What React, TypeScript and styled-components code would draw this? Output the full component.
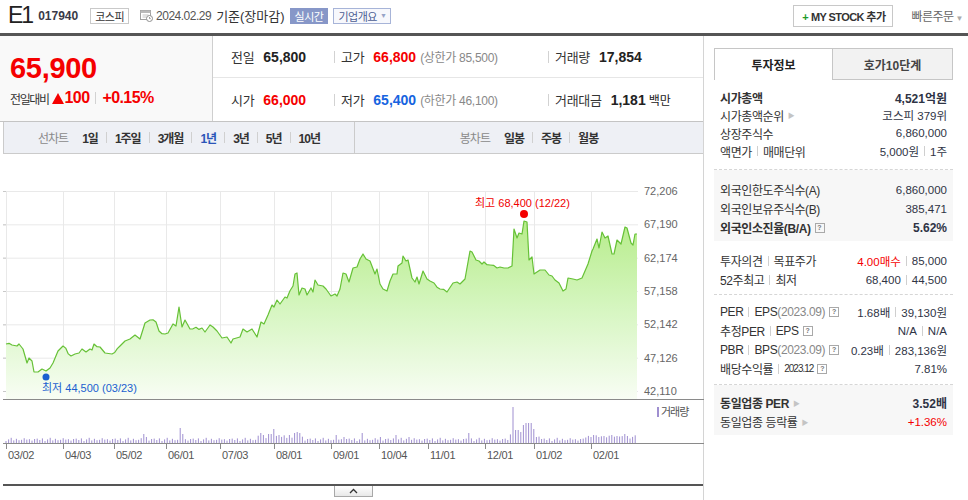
import React from "react";
import styled, { createGlobalStyle } from "styled-components";

const SANS = `"Liberation Sans", "Noto Sans CJK KR", sans-serif`;

const red = "#f50000";
const blue = "#1764e0";

const GlobalStyle = createGlobalStyle`
  * { box-sizing: border-box; }
  body {
    margin: 0;
    background: #fff;
    color: #333;
    font-family: ${SANS};
  }
`;

const Page = styled.div`
  width: 968px;
  height: 500px;
  overflow: hidden;
`;

/* ---------- header ---------- */

const Header = styled.header`
  display: flex;
  align-items: center;
  height: 36px;
  padding: 0 5px 2px 8px;
  border-bottom: 3px solid #555;
`;

const Name = styled.h1`
  margin: 0;
  font-size: 23px;
  font-weight: normal;
  letter-spacing: -2px;
  color: #222;
`;

const Code = styled.span`
  margin-left: 6px;
  font-size: 12px;
  font-weight: bold;
  color: #3a3a48;
`;

const Badge = styled.span<{ $tone?: "plain" | "solid" | "link" }>`
  display: inline-flex;
  align-items: center;
  height: 16px;
  padding: 0 4px;
  font-size: 11px;
  letter-spacing: -0.5px;
  border: 1px solid
    ${(p) => (p.$tone === "solid" ? "#8797c8" : p.$tone === "link" ? "#a7b4d8" : "#c9c9c9")};
  background: ${(p) => (p.$tone === "solid" ? "#8797c8" : p.$tone === "link" ? "#f7f8fc" : "#fff")};
  color: ${(p) => (p.$tone === "solid" ? "#fff" : p.$tone === "link" ? "#4d5e93" : "#333")};
  margin-left: ${(p) => (p.$tone === "plain" ? 12 : 5)}px;
`;

const DateText = styled.span`
  margin-left: 3px;
  font-size: 12px;
  letter-spacing: -0.5px;
  color: #555;
`;

const Basis = styled.span`
  margin-left: 5px;
  font-size: 13px;
  color: #333;
`;

const Spacer = styled.div`
  flex: 1;
`;

const MyStock = styled.button`
  height: 22px;
  padding: 0 7px 0 8px;
  border: 1px solid #c8c8c8;
  background: #fff;
  font-family: ${SANS};
  font-size: 11px;
  font-weight: bold;
  letter-spacing: -0.6px;
  color: #333;
  b {
    color: #1e9a2a;
    margin-right: 3px;
  }
`;

const QuickOrder = styled.span`
  margin-left: 18px;
  font-size: 12px;
  color: #666;
  letter-spacing: -0.5px;
  i {
    font-style: normal;
    font-size: 8px;
    color: #aaa;
    margin-left: 2px;
  }
`;

/* ---------- layout ---------- */

const Body = styled.div`
  display: flex;
  height: 464px;
`;

const Main = styled.section`
  width: 704px;
  border-right: 1px solid #d4d4d4;
`;

/* ---------- price block ---------- */

const PriceBlock = styled.div`
  display: flex;
  height: 86px;
  border-bottom: 1px solid #c4c4c4;
`;

const NowBox = styled.div`
  width: 213px;
  padding: 15px 0 0 10px;
  background: #f9f9f9;
  border-right: 1px solid #cfcfcf;
`;

const NowPrice = styled.div`
  font-size: 29px;
  line-height: 34px;
  font-weight: bold;
  color: ${red};
  letter-spacing: -0.3px;
`;

const Change = styled.div`
  display: flex;
  align-items: center;
  margin-top: 4px;
  color: ${red};
  font-weight: bold;
  font-size: 16px;
  letter-spacing: -0.6px;
  small {
    font-size: 12px;
    font-weight: normal;
    color: #333;
    letter-spacing: -1.4px;
    margin-right: 3px;
  }
`;

const Up = styled.span`
  width: 0;
  height: 0;
  margin-right: 1px;
  border-left: 6px solid transparent;
  border-right: 6px solid transparent;
  border-bottom: 11px solid ${red};
`;

const Sep = styled.span<{ $h?: number }>`
  display: inline-block;
  width: 1px;
  height: ${(p) => p.$h ?? 12}px;
  background: #d2d2d2;
  margin: 0 6px;
`;

const Stats = styled.div`
  flex: 1;
  display: grid;
  grid-template-columns: 121px 214px 1fr;
  grid-template-rows: 42px 43px;
`;

const Cell = styled.div<{ $first?: boolean; $top?: boolean }>`
  display: flex;
  align-items: center;
  padding-left: ${(p) => (p.$first ? 18 : 0)}px;
  border-bottom: ${(p) => (p.$top ? "1px solid #e6e6e6" : "none")};
`;

const Label = styled.span`
  font-size: 13px;
  color: #333;
  margin-right: 9px;
  letter-spacing: -0.3px;
`;

const Value = styled.span<{ $color?: string }>`
  font-size: 14px;
  font-weight: bold;
  color: ${(p) => p.$color ?? "#222"};
  small {
    font-size: 12px;
    font-weight: normal;
    margin-left: 3px;
  }
`;

const Limit = styled.span`
  margin-left: 4px;
  font-size: 12px;
  color: #888;
  letter-spacing: -0.3px;
`;

/* ---------- chart tabs ---------- */

const ChartTabs = styled.div`
  display: grid;
  grid-template-columns: 351px 1fr;
  height: 32px;
  margin-left: 3px;
  border-left: 1px solid #cbcbcb;
  border-bottom: 1px solid #cbcbcb;
  background: #eef0f5;
`;

const TabGroup = styled.div<{ $divider?: boolean }>`
  display: flex;
  align-items: center;
  justify-content: center;
  border-right: ${(p) => (p.$divider ? "1px solid #cbcbcb" : "none")};
`;

const TabTitle = styled.span`
  font-size: 12px;
  color: #8a8a8a;
  letter-spacing: -1px;
  margin-right: 14px;
`;

const TabItem = styled.span<{ $on?: boolean }>`
  font-size: 12px;
  font-weight: bold;
  letter-spacing: -1px;
  color: ${(p) => (p.$on ? "#2b55b8" : "#333")};
`;

const TabSep = styled.span`
  display: inline-block;
  width: 1px;
  height: 11px;
  margin: 0 8px;
  background: #d0d0d0;
`;

/* ---------- chart ---------- */

const ChartSvg = styled.svg`
  display: block;
  margin-left: 3px;
  text {
    font-family: ${SANS};
    font-size: 11px;
  }
`;

const Fold = styled.div`
  display: flex;
  justify-content: center;
  margin-left: 3px;
  border-top: 2px solid #555;
`;

const FoldButton = styled.button`
  display: flex;
  align-items: center;
  justify-content: center;
  width: 39px;
  height: 11px;
  padding: 0;
  border: 1px solid #a8a8a8;
  border-top: none;
  background: linear-gradient(#fff, #e8e8e8);
`;

/* ---------- side panel ---------- */

const Side = styled.aside`
  flex: 1;
  padding: 12px 15px 0 10px;
`;

const SideTabs = styled.div`
  display: grid;
  grid-template-columns: 119px 120px;
  height: 32px;
`;

const SideTab = styled.div<{ $on?: boolean }>`
  display: flex;
  align-items: center;
  justify-content: center;
  font-size: 12px;
  font-weight: bold;
  color: ${(p) => (p.$on ? "#222" : "#444")};
  background: ${(p) => (p.$on ? "#fff" : "#f2f2f2")};
  border: 1px solid #c6c6c6;
  border-bottom: ${(p) => (p.$on ? "none" : "1px solid #c6c6c6")};
  border-left: ${(p) => (p.$on ? "1px solid #c6c6c6" : "none")};
`;

const Group = styled.div<{ $grey?: boolean; $pt: number; $pb: number; $dash?: boolean }>`
  padding: ${(p) => p.$pt}px 0 ${(p) => p.$pb}px;
  background: ${(p) => (p.$grey ? "#f7f7f7" : "transparent")};
  border-bottom: ${(p) => (p.$dash ? "1px dashed #d6d6d6" : "none")};
`;

const Row = styled.div<{ $h?: number; $strong?: boolean }>`
  display: flex;
  align-items: center;
  justify-content: space-between;
  height: ${(p) => p.$h ?? 19}px;
  padding: 0 6px;
  font-size: 12px;
  letter-spacing: -0.4px;
  color: #333;
  font-weight: ${(p) => (p.$strong ? "bold" : "normal")};
`;

const Key = styled.span`
  display: flex;
  align-items: center;
  em {
    font-style: normal;
    color: #888;
  }
  small {
    font-size: 10px;
    letter-spacing: -1px;
  }
`;

const Num = styled.span<{ $color?: string }>`
  display: flex;
  align-items: center;
  font-size: 11.5px;
  letter-spacing: 0;
  color: ${(p) => p.$color ?? "#2f3445"};
`;

const Pipe = styled.span`
  display: inline-block;
  width: 1px;
  height: 10px;
  margin: 0 5px;
  background: #cfcfcf;
`;

const Help = styled.span`
  display: inline-flex;
  align-items: center;
  justify-content: center;
  width: 10px;
  height: 10px;
  margin-left: 4px;
  border: 1px solid #a9a9a9;
  font-size: 7px;
  font-weight: bold;
  color: #777;
  line-height: 1;
  letter-spacing: 0;
`;

const Arrow = styled.span`
  margin-left: 4px;
  font-size: 7px;
  color: #c4c4c4;
`;

/* ---------- data ---------- */

const PRICE: [number, number][] = [
  [6,343],[12,344],[17,345],[19,343],[23,348],[27,362],[29,357],[32,360],[34,371],[38,371],[42,368],[46,370],
  [50,367],[53,362],[58,350],[63,345],[71,355],[75,353],[79,352],[82,348],[86,351],[90,348],[92,349],[94,343],
  [100,346],[105,352],[112,353],[120,345],[125,340],[130,338],[135,334],[140,338],[145,322],[150,319],[156,321],
  [159,330],[165,333],[168,332],[173,323],[176,325],[179,306],[182,326],[185,319],[190,328],[202,327],[205,331],
  [210,324],[213,326],[217,330],[222,337],[227,336],[231,342],[233,338],[240,336],[243,328],[247,331],[252,328],
  [257,336],[261,321],[264,323],[268,314],[272,304],[274,306],[277,299],[280,303],[285,296],[287,297],[293,285],
  [295,273],[297,272],[299,294],[302,287],[305,288],[307,294],[311,287],[313,291],[315,279],[318,284],[323,285],
  [326,288],[331,295],[335,293],[337,295],[340,288],[343,272],[346,273],[349,281],[353,267],[357,266],[360,258],
  [363,253],[366,258],[370,260],[375,273],[377,268],[380,283],[383,288],[387,290],[390,280],[393,273],[397,273],
  [398,265],[402,262],[403,255],[406,260],[408,259],[412,277],[415,281],[417,276],[419,283],[423,270],[427,278],
  [430,280],[434,282],[440,288],[447,291],[453,282],[457,281],[460,283],[465,278],[470,250],[472,251],[476,259],
  [479,260],[482,263],[484,261],[490,264],[497,267],[500,266],[504,267],[508,267],[512,265],[514,228],[517,237],
  [519,232],[522,233],[524,220],[527,221],[529,259],[532,256],[534,273],[537,271],[540,269],[545,269],[549,274],
  [552,275],[555,279],[559,282],[563,290],[566,288],[568,277],[573,278],[577,279],[582,277],[585,270],[588,263],
  [592,250],[593,248],[597,238],[599,247],[602,231],[605,237],[608,235],[612,253],[614,253],[617,239],[621,243],
  [625,226],[627,227],[631,242],[633,244],[635,233],[637,233],
];

// fill long segments with small daily wiggles so the line reads like daily closes
const dailyPoints = (() => {
  const out: [number, number][] = [];
  PRICE.forEach(([x, y], i) => {
    if (i > 0) {
      const [px, py] = PRICE[i - 1];
      const steps = Math.floor((x - px) / 2.6);
      for (let s = 1; s < steps; s++) {
        const t = s / steps;
        const jitter = ((i * 7 + s * 5) % 3) - 1;
        out.push([px + (x - px) * t, py + (y - py) * t + jitter * 1.2]);
      }
    }
    out.push([x, y]);
  });
  return out;
})();

const MONTHS: [number, string][] = [
  [6, "03/02"], [63, "04/03"], [114, "05/02"], [166, "06/01"], [220, "07/03"], [274, "08/01"],
  [331, "09/01"], [379, "10/04"], [428, "11/01"], [485, "12/01"], [534, "01/02"], [591, "02/01"],
];

const Y_LABELS = ["72,206", "67,190", "62,174", "57,158", "52,142", "47,126", "42,110"];

const SPIKES: [number, number][] = [
  [144, 433], [147, 436], [180, 427], [183, 433], [261, 432], [264, 434], [270, 433], [274, 428],
  [278, 434], [290, 434], [294, 432], [297, 431], [300, 432], [337, 434], [343, 436], [362, 432],
  [380, 436], [397, 434], [410, 436], [470, 432], [513, 406], [517, 429], [521, 431], [524, 424],
  [527, 422], [530, 422], [533, 428], [536, 436], [590, 436], [594, 434], [598, 436], [605, 435],
  [612, 434], [618, 435], [624, 433], [628, 435],
];

const volumeBars = Array.from({ length: 243 }, (_, i) => {
  const x = 6 + i * 2.6;
  let base = 2 + ((i * 7) % 5) * 0.6 + ((i * 13) % 3) * 0.4;
  if ((x > 258 && x < 305) || (x > 585 && x < 636)) base += 2.5;
  if (x > 508 && x < 540) base += 4;
  let top = 442 - base;
  for (const [sx, sy] of SPIKES) {
    if (Math.abs(x - sx) < 1.4) top = sy;
  }
  return { x, top };
});

const gridY = (i: number) => 190 + (i * 200) / 6;

const PriceChart = () => {
  const line = dailyPoints.map(([x, y]) => `${x.toFixed(1)},${y.toFixed(1)}`).join(" ");
  const area = `6,398 ${line} 637,398`;
  return (
    <ChartSvg width={701} height={330} viewBox="3 153 701 330">
      <defs>
        <linearGradient id="areaFill" x1="0" y1="0" x2="0" y2="1">
          <stop offset="0" stopColor="#b7ec8b" />
          <stop offset="0.45" stopColor="#d3f5bc" />
          <stop offset="1" stopColor="#f8fdf4" />
        </linearGradient>
      </defs>

      {Y_LABELS.map((_, i) => (
        <g key={i}>
          <line x1={3} x2={638} y1={gridY(i) + 0.5} y2={gridY(i) + 0.5} stroke="#e9e9e9" />
          <line x1={3} x2={6} y1={gridY(i) + 0.5} y2={gridY(i) + 0.5} stroke="#c8c8c8" />
        </g>
      ))}
      {MONTHS.map(([x]) => (
        <line key={x} x1={x + 0.5} x2={x + 0.5} y1={190} y2={398} stroke="#e9e9e9" />
      ))}

      <polygon points={area} fill="url(#areaFill)" />
      <polyline points={line} fill="none" stroke="#66c136" strokeWidth={1.2} strokeLinejoin="round" />

      <circle cx={524} cy={213} r={4} fill="#f40000" />
      <text x={475} y={206} fill="#f00000" fontSize={12}>최고 68,400 (12/22)</text>
      <circle cx={46} cy={376} r={3.5} fill="#1a5fd0" />
      <text x={42} y={391} fill="#1a5fd0" fontSize={12}>최저 44,500 (03/23)</text>

      {Y_LABELS.map((t, i) => (
        <text key={t} x={644} y={gridY(i) + 4} fill="#666">{t}</text>
      ))}

      <line x1={3} x2={704} y1={398.5} y2={398.5} stroke="#8a8a8a" />

      {volumeBars.map(({ x, top }, i) => (
        <line key={i} x1={x} x2={x} y1={442} y2={top} stroke="#9f8fd0" strokeWidth={1} />
      ))}
      <rect x={657} y={406} width={2} height={10} fill="#9f8fd0" />
      <text x={661} y={415} fill="#555" fontSize={10} letterSpacing={-1}>거래량</text>

      <line x1={3} x2={704} y1={442.5} y2={442.5} stroke="#8a8a8a" />
      {MONTHS.map(([x, t]) => (
        <g key={t}>
          <line x1={x + 0.5} x2={x + 0.5} y1={442} y2={448} stroke="#8a8a8a" />
          <text x={x + 2} y={458} fill="#555" letterSpacing={-0.3}>{t}</text>
        </g>
      ))}
    </ChartSvg>
  );
};

const CalendarIcon = () => (
  <svg width="13" height="13" viewBox="0 0 13 13" style={{ marginLeft: 11 }}>
    <rect x="0.5" y="1.5" width="10" height="9" fill="#fff" stroke="#a0a0a0" />
    <rect x="0.5" y="1.5" width="10" height="2.5" fill="#b9b9b9" />
    <path d="M2.5 6h6M2.5 8h4" stroke="#c4c4c4" />
    <circle cx="9.5" cy="9.5" r="3" fill="#fff" stroke="#8e8e8e" />
    <path d="M9.5 8v1.6h1.2" stroke="#8e8e8e" fill="none" strokeWidth="0.9" />
  </svg>
);

const Caret = () => (
  <svg width="9" height="6" viewBox="0 0 9 6">
    <path d="M1 5 L4.5 1.5 L8 5" fill="none" stroke="#333" strokeWidth="1.3" />
  </svg>
);

export default function App() {
  return (
    <Page>
      <GlobalStyle />
      <Header>
        <Name>E1</Name>
        <Code>017940</Code>
        <Badge $tone="plain">코스피</Badge>
        <CalendarIcon />
        <DateText>2024.02.29</DateText>
        <Basis>기준(장마감)</Basis>
        <Badge $tone="solid">실시간</Badge>
        <Badge $tone="link">
          기업개요<span style={{ fontSize: 7, marginLeft: 3, color: "#97a4c8" }}>▼</span>
        </Badge>
        <Spacer />
        <MyStock>
          <b>+</b>MY STOCK 추가
        </MyStock>
        <QuickOrder>
          빠른주문<i>▼</i>
        </QuickOrder>
      </Header>

      <Body>
        <Main>
          <PriceBlock>
            <NowBox>
              <NowPrice>65,900</NowPrice>
              <Change>
                <small>전일대비</small>
                <Up />
                100
                <Sep />
                +0.15%
              </Change>
            </NowBox>
            <Stats>
              <Cell $first $top>
                <Label>전일</Label>
                <Value>65,800</Value>
              </Cell>
              <Cell $top>
                <Sep style={{ margin: "0 6px 0 0" }} />
                <Label>고가</Label>
                <Value $color={red}>66,800</Value>
                <Limit>(상한가 85,500)</Limit>
              </Cell>
              <Cell $top>
                <Sep style={{ margin: "0 6px 0 0" }} />
                <Label>거래량</Label>
                <Value>17,854</Value>
              </Cell>
              <Cell $first>
                <Label>시가</Label>
                <Value $color={red}>66,000</Value>
              </Cell>
              <Cell>
                <Sep style={{ margin: "0 6px 0 0" }} />
                <Label>저가</Label>
                <Value $color={blue}>65,400</Value>
                <Limit>(하한가 46,100)</Limit>
              </Cell>
              <Cell>
                <Sep style={{ margin: "0 6px 0 0" }} />
                <Label>거래대금</Label>
                <Value>
                  1,181<small>백만</small>
                </Value>
              </Cell>
            </Stats>
          </PriceBlock>

          <ChartTabs>
            <TabGroup $divider>
              <TabTitle>선차트</TabTitle>
              <TabItem>1일</TabItem>
              <TabSep />
              <TabItem>1주일</TabItem>
              <TabSep />
              <TabItem>3개월</TabItem>
              <TabSep />
              <TabItem $on>1년</TabItem>
              <TabSep />
              <TabItem>3년</TabItem>
              <TabSep />
              <TabItem>5년</TabItem>
              <TabSep />
              <TabItem>10년</TabItem>
            </TabGroup>
            <TabGroup>
              <TabTitle>봉차트</TabTitle>
              <TabItem>일봉</TabItem>
              <TabSep />
              <TabItem>주봉</TabItem>
              <TabSep />
              <TabItem>월봉</TabItem>
            </TabGroup>
          </ChartTabs>

          <PriceChart />

          <Fold>
            <FoldButton>
              <Caret />
            </FoldButton>
          </Fold>
        </Main>

        <Side>
          <SideTabs>
            <SideTab $on>투자정보</SideTab>
            <SideTab>호가10단계</SideTab>
          </SideTabs>

          <Group $pt={8} $pb={9} $dash>
            <Row $h={18} $strong>
              <Key>시가총액</Key>
              <Num style={{ fontSize: 12 }}>4,521억원</Num>
            </Row>
            <Row $h={18}>
              <Key>
                시가총액순위<Arrow>▶</Arrow>
              </Key>
              <Num>코스피 379위</Num>
            </Row>
            <Row $h={18}>
              <Key>상장주식수</Key>
              <Num>6,860,000</Num>
            </Row>
            <Row $h={18}>
              <Key>
                액면가<Pipe />매매단위
              </Key>
              <Num>
                5,000원<Pipe />1주
              </Num>
            </Row>
          </Group>

          <Group $grey $pt={10} $pb={4}>
            <Row>
              <Key>외국인한도주식수(A)</Key>
              <Num>6,860,000</Num>
            </Row>
            <Row>
              <Key>외국인보유주식수(B)</Key>
              <Num>385,471</Num>
            </Row>
            <Row $strong>
              <Key>
                외국인소진율(B/A)<Help>?</Help>
              </Key>
              <Num style={{ fontSize: 12 }}>5.62%</Num>
            </Row>
          </Group>

          <Group $pt={10} $pb={5} $dash>
            <Row>
              <Key>
                투자의견<Pipe />목표주가
              </Key>
              <Num>
                <span style={{ color: red }}>4.00매수</span>
                <Pipe />
                85,000
              </Num>
            </Row>
            <Row>
              <Key>
                52주최고<Pipe />최저
              </Key>
              <Num>
                68,400<Pipe />44,500
              </Num>
            </Row>
          </Group>

          <Group $pt={7} $pb={6} $dash>
            <Row>
              <Key>
                PER<Pipe />EPS<em>(2023.09)</em>
                <Help>?</Help>
              </Key>
              <Num>
                1.68배<Pipe />39,130원
              </Num>
            </Row>
            <Row>
              <Key>
                추정PER<Pipe />EPS<Help>?</Help>
              </Key>
              <Num>
                N/A<Pipe />N/A
              </Num>
            </Row>
            <Row>
              <Key>
                PBR<Pipe />BPS <em>(2023.09)</em>
                <Help>?</Help>
              </Key>
              <Num>
                0.23배<Pipe />283,136원
              </Num>
            </Row>
            <Row>
              <Key>
                배당수익률<Pipe />
                <small>2023.12</small>
                <Help>?</Help>
              </Key>
              <Num>7.81%</Num>
            </Row>
          </Group>

          <Group $grey $pt={8} $pb={4}>
            <Row $strong>
              <Key>
                동일업종 PER<Arrow>▶</Arrow>
              </Key>
              <Num style={{ fontSize: 12 }}>3.52배</Num>
            </Row>
            <Row>
              <Key>
                동일업종 등락률<Arrow>▶</Arrow>
              </Key>
              <Num $color={red}>+1.36%</Num>
            </Row>
          </Group>
        </Side>
      </Body>
    </Page>
  );
}
